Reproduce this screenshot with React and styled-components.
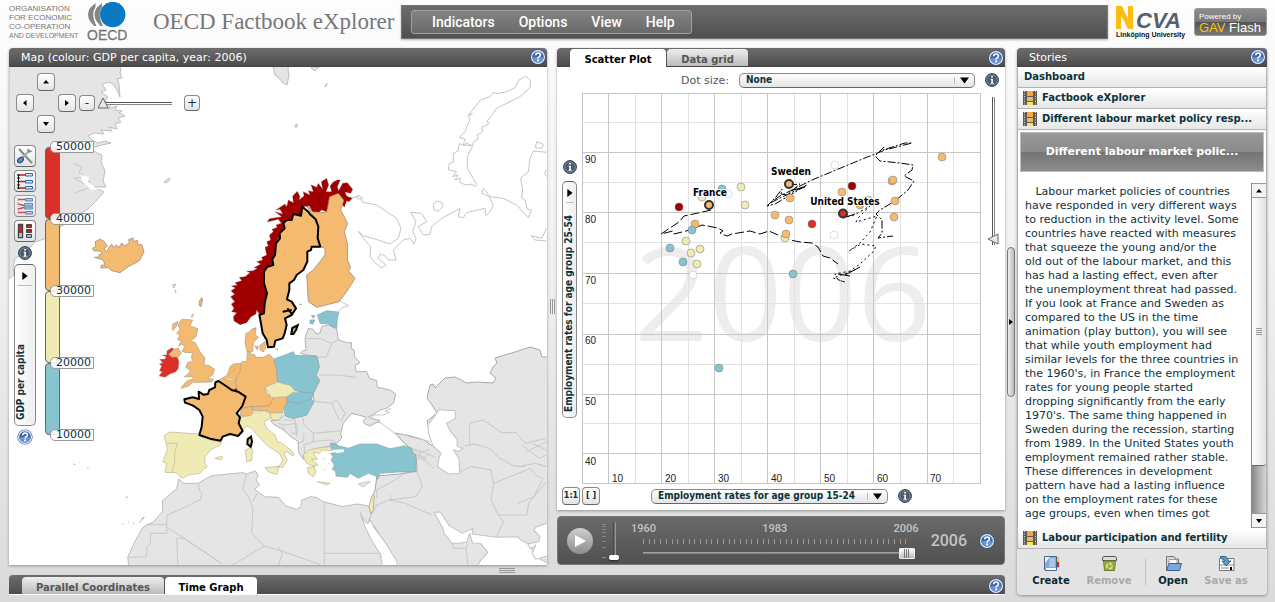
import React from "react";
import styled, { createGlobalStyle, css } from "styled-components";

const sans = `"DejaVu Sans", Verdana, sans-serif`;
const condensed = `"DejaVu Sans Condensed", "DejaVu Sans", sans-serif`;
const display = `Roboto, "Liberation Sans", sans-serif`;
const arial = `"Liberation Sans", Arial, sans-serif`;

const colors = {
  ink: "#0b333c",
  orange: "#f4bb70",
  red: "#d9302a",
  dark: "#a00000",
  yellow: "#f0ebb4",
  blue: "#88c3d0",
  land: "#e5e5e5",
};

const Global = createGlobalStyle`
  * { box-sizing: border-box; }
  html { min-height: 100%; background: linear-gradient(#fdfdfd, #f0f0f0 45%, #dadada) no-repeat #dadada; }
  body { margin: 0; font-family: ${sans}; font-size: 11px; color: ${colors.ink}; }
  button, select, input { font: inherit; color: inherit; margin: 0; padding: 0; }
`;

/* ---------- page frame ---------- */

const Page = styled.div`
  min-height: 100vh;
  display: flex;
  flex-direction: column;
  padding: 0 8px 7px 9px;
`;

const Header = styled.header`
  display: flex;
  align-items: center;
  height: 48px;
  padding-bottom: 4px;
`;

const Workspace = styled.main`
  flex: 1;
  display: flex;
`;

const MainArea = styled.div`
  flex: 1;
  min-width: 0;
  display: flex;
  flex-direction: column;
`;

const TopRow = styled.div`
  flex: 1;
  display: flex;
`;

const Panel = styled.section`
  display: flex;
  flex-direction: column;
  min-width: 0;
  background: #fff;
  border-radius: 4px 4px 0 0;
  box-shadow: 0 1px 3px rgba(0, 0, 0, 0.35);
`;

const MapPanel = styled(Panel)`
  flex: 538 1 0;
`;

const MiddleColumn = styled.div`
  flex: 448 1 0;
  min-width: 0;
  display: flex;
  flex-direction: column;
  gap: 6px;
`;

const PlotPanel = styled(Panel)`
  flex: 1;
`;

const StoriesPanel = styled(Panel)`
  width: 250px;
  background: #e3e3e3;
  border-radius: 4px;
`;

const TitleBar = styled.div`
  display: flex;
  align-items: ${(p) => (p.$tabs ? "flex-end" : "center")};
  height: 19px;
  flex: none;
  padding: ${(p) => (p.$tabs ? "0 1px 0 13px" : "0 1px 0 12px")};
  color: #fff;
  background: linear-gradient(#6d6d6d, #4c4c4c);
  border-bottom: 1px solid #444;
  border-radius: 4px 4px 0 0;
`;

const Title = styled.h2`
  flex: 1;
  margin: 0;
  font-size: 11px;
  font-weight: normal;
`;

const TabList = styled.div`
  flex: 1;
  display: flex;
  align-items: flex-end;
  gap: 1px;
`;

const Tab = styled.button`
  height: ${(p) => (p.$active ? 18 : 17)}px;
  width: ${(p) => p.$width}px;
  margin-bottom: ${(p) => (p.$active ? -1 : 0)}px;
  border: 0;
  border-radius: 4px 4px 0 0;
  padding-top: 4px;
  font-weight: bold;
  font-size: 10px;
  line-height: 14px;
  color: ${(p) => (p.$active ? "#000" : "#555")};
  background: ${(p) => (p.$active ? "#fff" : "linear-gradient(#eee, #bbb)")};
`;

/* ---------- shared controls ---------- */

const IconButton = styled.button`
  display: flex;
  flex: none;
  border: 0;
  background: none;
`;

const HelpButton = () => (
  <IconButton aria-label="Help">
    <svg width="16" height="16" viewBox="0 0 16 16">
      <circle cx="8" cy="8" r="7.6" fill="#2c5290" />
      <circle cx="8" cy="8" r="6.4" fill="#3c67ab" stroke="#e9f0fa" strokeWidth="1.2" />
      <path d="M2.4 9A5.8 5.8 0 0 0 13.6 9Q8 6.500 2.400 9Z" fill="#6d95cc" />
      <path d="M5.700 6.300Q5.700 4 8.100 4Q10.400 4 10.400 6Q10.400 7.200 9 7.900Q8.100 8.400 8.100 9.600" fill="none" stroke="#fff" strokeWidth="1.600" />
      <rect x="7.200" y="10.500" width="1.800" height="1.800" fill="#fff" />
    </svg>
  </IconButton>
);

const InfoButton = () => (
  <IconButton aria-label="Information">
    <svg width="14" height="14" viewBox="0 0 14 14">
      <circle cx="7" cy="7" r="6.400" fill="#4d5a6c" stroke="#2e3a4a" />
      <circle cx="7" cy="7" r="5.200" fill="none" stroke="#8a97a8" strokeWidth=".8" />
      <path d="M6.200 3h1.700v1.600H6.200zM5.600 5.800h2.300v3.900h.9v1H5.500v-1h.8V6.800h-.7z" fill="#fff" />
    </svg>
  </IconButton>
);

const raised = css`
  border: 1px solid #8a8a8a;
  border-bottom-color: #666;
  background: linear-gradient(#fff, #e4e4e4);
  color: ${colors.ink};
`;

const SmallButton = styled.button`
  ${raised}
  display: flex;
  align-items: center;
  justify-content: center;
  flex: none;
  width: ${(p) => p.$size}px;
  height: ${(p) => p.$size}px;
  border-radius: 4px;
  font-size: ${(p) => (p.$tiny ? 8 : 12)}px;
  font-weight: ${(p) => (p.$tiny ? "bold" : "normal")};
  line-height: 12px;
  opacity: ${(p) => (p.$faded ? 0.75 : 1)};
`;

const arrows = { up: "M0 4.500L3 1L6 4.500Z", down: "M0 1L3 5L6 1Z", left: "M4.500 0L1 3L4.500 6Z", right: "M1 0L5 3L1 6Z" };
const Arrow = ({ dir, size = 6 }) => (
  <svg width={size} height={size} viewBox="0 0 6 6"><path d={arrows[dir]} fill="#000" /></svg>
);

const SelectBox = styled.span`
  position: relative;
  display: flex;
  width: ${(p) => p.$width}px;
  svg { position: absolute; right: 6px; top: 3px; pointer-events: none; }
  &::after { content: ""; position: absolute; right: 20px; top: 4px; height: 7px; border-left: 1px solid #bbb; }
`;

const Select = styled.select`
  ${raised}
  appearance: none;
  width: 100%;
  height: 15px;
  border-radius: 5px;
  padding: 0 22px 0 6px;
  font: bold 10px/12px ${condensed};
`;

const VerticalBox = styled.span`
  position: relative;
  display: flex;
  width: ${(p) => p.$width}px;
  height: ${(p) => p.$height}px;
  svg { position: absolute; left: calc(50% - 4px); top: 8px; pointer-events: none; }
  &::after { content: ""; position: absolute; left: 4px; right: 4px; top: 21px; border-top: 1px solid #bbb; }
`;

const VerticalSelect = styled.select`
  ${raised}
  appearance: none;
  width: 100%;
  height: 100%;
  border-radius: 5px;
  writing-mode: vertical-rl;
  transform: rotate(180deg);
  padding: 5px 0 22px;
  background: linear-gradient(90deg, #eee, #fff);
  font: bold 10px/12px ${condensed};
  text-align: start;
`;

const HorizontalDropDown = ({ label, width, children }) => (
  <SelectBox $width={width}>
    <Select aria-label={label}><option>{children}</option></Select>
    <Arrow dir="down" size={9} />
  </SelectBox>
);

const VerticalDropDown = ({ label, width, height, children }) => (
  <VerticalBox $width={width} $height={height}>
    <VerticalSelect aria-label={label}><option>{children}</option></VerticalSelect>
    <Arrow dir="right" size={8} />
  </VerticalBox>
);

const Grip = styled.div`
  flex: none;
  align-self: center;
  width: ${(p) => (p.$across ? 16 : 5)}px;
  height: ${(p) => (p.$across ? 5 : 15)}px;
  background: repeating-linear-gradient(${(p) => (p.$across ? "180deg" : "90deg")}, #999 0 1px, transparent 1px 2px);
`;

const Splitter = styled.div`
  display: flex;
  justify-content: center;
  flex: none;
  ${(p) => (p.$across ? "height: 10px; align-items: center;" : "width: 10px;")}
`;

/* ---------- header ---------- */

const OrgName = styled.div`
  width: 78px;
  font: 8px/9px ${arial};
  color: #777;
  white-space: nowrap;
  small { display: block; font-size: 7px; }
`;

const Brand = styled.h1`
  flex: none;
  width: 248px;
  margin: 0 0 0 26px;
  font: 23px/28px "Liberation Serif", Georgia, serif;
  color: #777;
  white-space: nowrap;
`;

const MenuBand = styled.div`
  flex: 1;
  display: flex;
  align-items: center;
  height: 34px;
  padding-left: 9px;
  background: linear-gradient(#6c6c6c, #505050);
  border: 1px solid #777;
  box-shadow: 0 1px 2px rgba(0, 0, 0, 0.3);
`;

const Menu = styled.nav`
  display: flex;
  align-items: center;
  gap: 24px;
  width: 281px;
  height: 24px;
  padding-left: 20px;
  border: 1px solid #a0a0a0;
  border-radius: 3px;
  background: linear-gradient(#838383, #6a6a6a);
`;

const MenuItem = styled.button`
  border: 0;
  background: none;
  color: #fff;
  font: 500 14px/20px ${display};
`;

const Ncva = styled.div`
  margin-left: 8px;
  width: 70px;
  font: bold 7px/9px ${arial};
  color: #111;
  white-space: nowrap;
  svg { display: block; }
`;

const GavBadge = styled.div`
  width: 73px;
  height: 28px;
  margin-left: 8px;
  padding: 3px 4px;
  border: 1px solid #999;
  border-radius: 3px;
  background: linear-gradient(#8d8d8d, #777 50%, #555 50%, #777);
  color: #fff;
  font: 8px/9px ${arial};
  white-space: nowrap;
  b { display: block; font: 13px/13px ${arial}; }
  em { font-style: normal; color: #fcc010; }
`;

const OecdLogo = () => (
  <svg width="40" height="40" viewBox="0 0 40 40" role="img" aria-label="OECD">
    <circle cx="25.700" cy="12.500" r="12.700" fill="#0a7ac4" />
    <path d="M8.500 1L3 6Q-1 12.500 3 19L7 24H9.500Q3.500 12.500 8.500 5ZM15 1L9.500 6Q5.500 12.500 9.500 19L13.500 24H16Q10 12.500 15 5Z" fill="#858585" />
    <text x="0" y="38" fontFamily="Liberation Sans" fontSize="14" fill="#777" stroke="#777" strokeWidth=".3">OECD</text>
  </svg>
);

/* ---------- map ---------- */

const MapBody = styled.div`
  position: relative;
  flex: 1;
  overflow: hidden;
`;

const MapDrawing = styled.svg`
  position: absolute;
  inset: 0;
  width: 100%;
  height: 100%;
`;

const MapControls = styled.div`
  position: relative;
  display: inline-flex;
  flex-direction: column;
  gap: 11px;
  padding: 4px 5px;
`;

const NavRow = styled.div`
  display: flex;
  align-items: center;
  gap: 2px;
`;

const PanPad = styled.div`
  display: grid;
  grid-template: repeat(3, 21px) / repeat(3, 21px);
  place-items: center;
  grid-template-areas: ". up ." "left . right" ". down .";
`;

const PanButton = styled(SmallButton)`
  grid-area: ${(p) => p.$dir};
`;

const triangleUp = `url("data:image/svg+xml,%3Csvg xmlns='http://www.w3.org/2000/svg' width='12' height='12'%3E%3Cpath d='M6 1L11 11H1Z' fill='%23e8e8e8' stroke='%23666'/%3E%3C/svg%3E")`;
const triangleLeft = `url("data:image/svg+xml,%3Csvg xmlns='http://www.w3.org/2000/svg' width='12' height='12'%3E%3Cpath d='M1 6L11 1V11Z' fill='%23e8e8e8' stroke='%23666'/%3E%3C/svg%3E")`;

const ZoomSlider = styled.input`
  appearance: none;
  width: 75px;
  height: 14px;
  margin-right: 10px;
  background: linear-gradient(#555, #555) 6px 6px / 100% 1px no-repeat,
    linear-gradient(#888, #888) 6px 8px / 100% 1px no-repeat,
    linear-gradient(#fff, #fff) 6px 7px / 100% 1px no-repeat;
  &::-webkit-slider-thumb { appearance: none; width: 12px; height: 12px; background: ${triangleUp}; }
`;

const LegendRow = styled.div`
  display: flex;
  gap: 9px;
`;

const ToolColumn = styled.div`
  display: flex;
  flex-direction: column;
  align-items: center;
  gap: 3px;
`;

const InfoSlot = styled.div`
  display: flex;
  padding: 1px 0;
`;

const Legend = styled.div`
  width: 15px;
  padding-top: 2px;
`;

const LegendBand = styled.div`
  position: relative;
  height: 72px;
  border: 1px solid #666;
  border-radius: 4px;
  background: ${(p) => p.$color};
`;

const LegendValue = styled.span`
  position: absolute;
  left: 4px;
  ${(p) => (p.$last ? "bottom: -7px;" : "top: -7px;")}
  width: 44px;
  padding-right: 2px;
  z-index: 1;
  border: 1px solid #999;
  border-radius: 5px 0 0 5px;
  background: rgba(255, 255, 255, 0.88);
  line-height: 10px;
  text-align: right;
`;

const bands = [
  [colors.red, "50000"],
  [colors.orange, "40000"],
  [colors.yellow, "30000"],
  [colors.blue, "20000"],
];

const Sheet = ({ x, y, sx = 0.33333, children }) => (
  <g transform={`translate(${x} ${y}) scale(${sx} .33333)`}>{children}</g>
);

const Shape = ({ d, fill = colors.land, line = "#bdbdbd", w = 1 }) => (
  <path d={d} fill={fill} stroke={line} strokeWidth={w} strokeLinejoin="round" vectorEffect="non-scaling-stroke" />
);
const Border = ({ d, line = "#c8c8c8" }) => <Shape d={d} fill="none" line={line} />;

const edge = "#a99d8c";

const EuropeMap = () => (
  <MapDrawing viewBox="9 67 538 498" preserveAspectRatio="xMinYMin slice" role="img" aria-label="Map of Europe coloured by GDP per capita">
    {/* Greenland and the arctic islands */}
    <Shape d="M9 60H116L121 69L120 73L122 78L117 79L119 84L120 97L117 90L113 84L109 82L102 84L106 90L101 92L108 97L104 101L112 104L108 109L117 106L115 110L122 111L119 113L125 116L118 118L121 122L115 124L117 129L109 127L112 131L101 130L104 134L94 133L88 136L92 140L98 143L105 141L111 143L102 145L91 148L97 153L102 155L101 162L105 171L103 181L106 187L94 187L104 192L96 201L88 209L80 214L62 226L44 239L35 242L29 249L24 248L20 256L15 258L13 268L14 275L9 279Z" />
    <Border d="M73 163L82 167L79 173L85 177L74 178L84 184L89 181L91 187L75 193" />
    <path d="M80 175L89 177L88 182L96 188L104 188L91 190L83 182Z" fill="#fff" />
    <Shape d="M272 60H290L288 69L289 75L287 85L283 83L279 78L275 75ZM311 67L319 67L315 71L312 69ZM325 87L327 83L327 84ZM295 125L297 124L297 127L295 127ZM164 182L169 178L170 180L166 183ZM172 285L176 284L174 288ZM175 290L176 293Z" />

    <Sheet x={0} y={140}>
      <Shape fill={colors.orange} line={edge} d="M277 325L287 320L286 305L300 297L313 305L322 318L312 326L320 336L328 320L335 312L340 322L350 315L357 323L365 309L374 318L388 309L386 299L399 294L401 306L411 300L415 315L425 313L432 335L425 350L418 362L385 380L360 398L335 392L325 383L302 384L304 375L315 376L310 360L283 352L298 351L297 344L307 342L301 333L282 333Z" />
    </Sheet>

    {/* Asia and the Middle East */}
    <Shape line="#a8a8a8" d="M430 385L427 398L432 405L437 413L427 421L431 434L434 447L424 440L411 436L395 433L402 441L408 446L416 455L417 471L400 474L377 476L375 490L371 500L370 513L369 523L374 526L385 543L396 562V575H555V357L542 357L540 350L530 347L515 352L495 358L497 363L493 367L490 373L496 378L493 383L477 382L467 383L455 377L445 378L435 388L433 384Z" />

    <Sheet x={0} y={400} sx={0.35714}>
      {/* North Africa */}
      <Shape d="M500 237L515 250L555 250L590 228L640 222L680 218L690 222L715 213L723 225L717 240L727 255L713 268L740 290L780 292L800 318L830 328L843 320L845 300L870 290L885 292L905 305L960 320L1000 312L1032 318L1040 345L1032 362L1045 379L1080 430L1112 500H360L358 470L380 420L400 382L430 365L455 335L455 302L495 265Z" />
      <g fill="#fff" stroke="#c4c4c4" strokeWidth="3" strokeLinejoin="round">
        <path d="M1230 28L1240 30L1275 32L1275 55L1250 70L1260 92L1280 118L1280 138L1296 145L1284 154L1270 150L1285 175L1287 220L1255 222L1225 200L1230 170L1235 160L1212 137L1200 100L1198 75L1216 50Z" />
        <path d="M1215 337L1233 336L1258 377L1295 400L1325 385L1322 402L1390 412L1450 410L1460 422L1482 432L1498 470L1545 495V510H1330L1345 482L1366 457L1345 430L1323 429L1315 400L1306 427L1285 430L1266 430L1243 400L1240 385Z" />
        <path d="M1008 338L1020 362L1030 371L1037 360L1045 379L1080 430L1112 485L1112 510H1072L1066 465L1040 420L1022 380Z" />
        <path d="M1540 362L1525 372L1500 382L1495 391L1512 410L1508 425L1478 432L1484 445L1496 441L1500 435L1490 460L1500 478L1540 465Z" />
      </g>
      <Border d="M555 250L558 270L565 280L562 298L530 315L498 332L467 345V400H421V430L412 442L410 470L358 472M467 373H410M467 381L620 490M690 222L680 268L697 293L708 325L705 400L740 438L650 496M740 438L780 450L895 493M720 280L708 305M908 304V495M908 460H1066M495 415H516L620 490M495 415L498 496M780 440L790 462L780 496" />
      <Border d="M1055 295L1055 270L1105 240L1130 222M1045 320L1090 300L1130 308L1210 345M1167 215L1183 258L1165 290L1090 300M1040 342L1055 320M1092 285L1098 305M1165 175L1185 178L1215 205M1150 140L1160 150L1195 180M1170 175L1180 155L1215 170M1287 215L1320 200L1375 210L1382 250L1375 300L1395 345L1410 365L1390 412M1395 345H1475M1382 250L1440 225L1485 205L1500 225L1520 235L1495 290L1450 310M1315 138V70L1353 60L1405 98L1445 98L1470 130L1530 115M1300 138L1330 132L1370 145L1400 175L1440 198L1470 200M1460 198L1500 190L1530 200M1475 155L1530 125M1490 130L1530 150M1460 135L1510 175L1530 165M1475 345L1480 310L1530 245M1266 430L1270 445H1305L1310 430M1305 445L1310 496" />
      <Shape fill={colors.yellow} line="#b9b49a" d="M1042 286L1048 288L1045 330L1038 342L1033 320ZM205 192l6 2M222 187l2 2M244 204l4 2M352 291l6 1M343 373h3M358 364l4 4M373 369l4 3M391 368l10 -16M400 358l4 -8" />
      <Shape line="#c4c4c4" d="M1003 253L1018 247L1037 245L1018 260Z" />
    </Sheet>

    {/* Northern Russia */}
    <Sheet x={330} y={65}>
      <g fill="none" stroke="#c4c4c4" strokeWidth="3" strokeLinejoin="round">
        <path d="M415 150L430 132L452 105L480 95L492 82L500 86L530 80L555 68L567 45L588 34L602 46L600 68L570 95L500 130L485 152L470 170L478 175L455 188L458 200L442 210L445 222L432 230L425 242L412 235L400 240L405 222L388 218L405 200L412 180L420 165L415 155L427 145Z" />
        <path d="M388 236L400 240L428 242L412 275L412 310L440 358L436 364L425 358L408 360L388 352L392 340L375 345L384 330L368 335L380 320L355 315L358 295L370 292L370 265L384 258Z" />
        <path d="M66 400L85 392L98 412L140 420L200 460L213 490L205 520L180 537L135 522L100 512L84 498L105 525L122 545L120 575L132 590L155 609L168 600L145 580L150 567L165 572L175 585L198 585L190 555L220 525L240 520L252 537L258 520L248 500L258 470L242 442L275 445L290 470L265 485L280 510L300 508L305 485L335 460L372 440L390 430L385 455L400 458L410 443L465 430L468 452L480 440L490 420L478 395L455 385L460 370L480 395L520 400L560 420L595 458L604 435L592 432L585 405L575 400L578 375L572 340L595 320L600 280L610 258L650 262" />
        <path d="M310 418L320 408L335 412L340 422L325 439L312 435ZM616 248L620 230L640 238L636 250ZM603 512L635 520L650 490M604 512L615 525L650 528M650 315L644 325L650 335" />
      </g>
      <path d="M78 397L90 392L98 400L86 402Z" fill="#fff" stroke="#c4c4c4" strokeWidth="3" />
      <Border d="M0 700L28 708L40 714L56 722L36 728L28 738" />
      <Border d="M183 1030L165 1038L180 1042L160 1050L135 1050L122 1058L130 1072L150 1072L190 1102L215 1120" />
    </Sheet>

    {/* Central and southern Europe */}
    <Sheet x={150} y={300}>
      <Shape line="#b3b3b3" d="M470 165L452 160L456 154L468 150L465 115L475 85L490 88L498 102L511 98L515 80L535 75L560 85L565 120L590 128L605 128L603 145L612 150L614 170L630 188L616 196L618 215L650 215L658 235L680 242L682 262L720 270L737 282L730 310L710 325L690 330L668 345L655 350L665 355L690 362L660 378L645 372L640 362L650 352L625 345L605 340L580 370L572 400L575 415L560 430L540 438L490 448L460 465L460 478L445 455L445 425L425 412L400 390L370 372L362 362L388 360L403 345L430 355L470 345L492 305L490 280L508 245L498 225L508 200L500 168Z" />
      <Border d="M468 116L510 116L545 130L565 120M545 130L530 170L503 172M508 225L560 225L620 232M490 303L545 310L560 300L585 340L572 365M545 310L558 340L568 360M458 350L462 375L490 400L575 392M400 360L435 360L440 410M385 370L405 375L440 370M462 400L460 425L440 430M490 400L490 425L462 435L464 460M490 425L540 420L555 425M440 370L442 400L425 400M395 375L410 400" />
      <Border d="M755 402L785 412L815 418L840 425M785 445L815 455L840 450M800 465L820 475L840 460" />
      <g fill={colors.red} stroke={edge}>
        <path d="M27 228L36 215L28 212L35 198L28 192L38 188L29 178L45 177L48 170L36 166L50 164L51 152L66 143L73 148L62 160L65 172L82 170L87 185L85 205L78 215L60 222L45 232Z" />
      </g>
      <g fill={colors.orange} stroke={edge} strokeWidth="2">
        <path d="M56 164L72 147L85 145L94 160L84 172L68 170Z" />
        <path d="M95 58L128 60L120 77L144 86L138 110L122 123L136 128L150 155L165 175L162 195L176 196L194 208L188 225L172 235L190 238L186 246L152 247L128 247L116 258L93 265L109 244L130 236L130 230L103 230L120 217L118 208L108 203L112 188L128 184L124 172L128 158L108 158L96 154L104 140L96 132L86 138L94 122L82 118L90 105L80 100L90 88L84 75Z" />
        <path d="M68 72L84 64L80 78L68 92ZM124 48L131 42L126 52ZM150 0L156 -8L156 4L152 15Z" />
        <path d="M288 100L300 95L304 88L318 83L316 105L325 112L310 128L308 155L292 156L285 130ZM329 137L345 124L347 144L340 156L330 150ZM314 137L325 140L322 150ZM376 145L384 150Z" />
        <path d="M292 155L302 158L301 165L312 162L318 172L340 172L358 162L371 176L380 210L383 245L345 262L350 280L370 295L360 318L305 320L270 325L285 290L262 275L255 250L262 225L272 190L278 184L290 186Z" />
        <path d="M207 240L232 225L240 200L250 192L272 190L270 215L258 235L258 250L262 270L257 274L240 268ZM217 236L240 242L258 240M245 215L258 205" />
        <path d="M270 347L274 325L305 320L310 332L302 347L285 350Z" />
        <path d="M305 320L358 318L370 293L394 290L413 292L412 306L403 325L395 338L370 340L345 332L310 332Z" />
      </g>
      <path d="M250 272L258 263L264 277Z" fill="#b01820" />
      <g fill={colors.blue} stroke="#86a6ac" strokeWidth="2">
        <path d="M372 177L410 163L430 155L436 166L500 168L508 200L498 225L509 240L490 280L460 278L435 272L420 256L383 246L380 210Z" />
        <path d="M410 292L430 278L460 278L490 280L485 298L445 310L412 305Z" />
        <path d="M403 322L412 306L445 310L485 298L492 305L480 325L470 345L430 355L410 350L403 340Z" />
        <path d="M502 45L530 32L567 36L562 55L560 85L548 82L535 72L510 70ZM480 60L495 60L488 73L480 70ZM484 46L495 47L490 55Z" />
        <path d="M541 430L556 430L565 437L595 445L630 432L680 432L720 446L765 437L785 445L788 460L797 465L798 515L778 516L745 516L690 520L683 538L676 527L655 520L625 535L600 520L592 532L558 528L557 515L547 508L553 495L543 480L549 470L541 460L583 456L583 449L545 448Z" />
      </g>
      <path d="M552 449L582 448L582 456L560 460Z" fill="#fff" />
      <g fill={colors.yellow} stroke="#b9b49a" strokeWidth="2">
        <path d="M345 262L383 246L395 250L420 256L435 272L410 290L365 293Z" />
        <path d="M358 340L400 338L388 360L365 358Z" />
        <path d="M272 350L302 347L312 338L345 332L360 340L362 355L342 365L350 385L375 405L382 425L398 430L432 460L430 468L410 455L402 460L412 480L398 502L385 502L398 482L390 462L350 435L328 412L305 385L290 378L275 392L268 370ZM345 503L387 499L380 524L355 515ZM286 450L300 443L308 448L305 482L290 485Z" />
        <path d="M42 408L58 396L148 402L150 408L182 420L215 428L210 436L185 447L165 470L165 490L172 500L160 508L150 520L115 525L98 535L90 530L78 518L45 517L50 490L38 485L52 450L48 428ZM50 430L82 430L74 460L75 485L66 515M195 475L215 468L218 475L210 480Z" />
        <path d="M460 465L478 450L500 445L540 440L546 452L515 450L508 460L490 458L502 478L485 478L505 495L490 497L498 515L490 530L475 520L472 502L495 500L470 490L465 482ZM502 545L540 550L530 554ZM520 475l5 4M535 490l4 3M522 508l4 3" />
      </g>
      <path d="M205 243L228 258L245 270L264 275L287 290L277 318L260 340L270 352L266 370L278 393L264 408L240 402L218 410L212 422L180 416L148 405L155 380L158 350L148 330L128 316L105 308L103 298L128 292L147 297L146 275L160 284L174 282L178 270L195 262L196 247Z" fill={colors.orange} stroke="#000" strokeWidth="6" strokeLinejoin="round" />
      <path d="M293 418L303 410L306 425L302 440L292 432Z" fill={colors.orange} stroke="#000" strokeWidth="6" />
    </Sheet>

    {/* Scandinavia */}
    <Sheet x={150} y={160}>
      <path d="M468 135L490 155L525 158L535 135L538 110L565 100L582 120L572 150L593 190L583 215L593 255L592 300L602 322L596 332L615 355L606 370L590 395L567 425L500 442L475 425L472 370L470 345L490 330L525 285L525 265L511 260L503 225L505 200L497 178Z" fill={colors.orange} stroke={edge} strokeWidth="3" />
      <path d="M330 465L320 450L318 462L303 470L290 488L270 494L252 483L250 470L260 458L245 455L252 445L244 432L254 425L242 410L254 403L243 392L256 384L244 378L262 375L255 368L275 362L268 352L285 350L300 338L290 334L310 332L322 325L312 323L332 312L320 305L338 300L335 292L350 285L345 262L355 258L350 245L362 240L358 225L370 215L366 208L382 202L378 195L394 190L385 178L352 186L358 176L395 170L375 155L398 162L390 148L378 150L405 132L410 140L415 120L430 128L428 108L442 94L450 110L447 120L462 108L460 95L480 105L475 92L490 95L483 74L500 82L505 70L518 88L514 65L530 55L536 75L528 95L545 95L540 78L550 66L562 60L571 60L562 80L566 92L578 70L592 68L608 88L602 100L585 96L590 108L607 115L597 125L590 122L583 142L578 135L582 120L565 100L538 110L530 155L515 150L508 156L488 155L478 138L457 140L453 168L425 175L405 190L400 205L378 250L370 300L368 315L342 335L350 400L340 460Z" fill={colors.dark} stroke="#8d6464" />
      <path d="M457 140L475 155L480 163L497 178L505 200L503 235L511 260L485 260L483 270L472 275L472 305L460 330L440 345L432 360L418 370L418 390L411 418L425 425L438 445L425 465L405 475L410 495L404 520L398 535L376 542L372 560L354 562L350 540L338 520L332 485L328 465L342 460L344 430L351 400L342 370L342 335L352 320L370 315L367 298L375 285L378 250L390 235L389 220L404 205L400 190L410 180L425 180L430 162L453 167Z" fill={colors.orange} stroke="#000" strokeWidth="6" strokeLinejoin="round" />
      <path d="M398 455L425 450M412 445L428 465M424 522L427 504L443 496L438 510L430 522Z" stroke="#000" strokeWidth="6" fill={colors.orange} />
      <path d="M448 433l8 0M310 505l8 3M147 435L150 420L158 418L153 440Z" fill={colors.orange} stroke={edge} strokeWidth="3" />
    </Sheet>
  </MapDrawing>
);

const toolIcons = {
  Settings: (
    <svg width="18" height="18" viewBox="0 0 18 18">
      <path d="M3 2L14 14M12 12L16 16" stroke="#8b8b8b" strokeWidth="2.200" />
      <path d="M14 3L6 11" stroke="#9aa" strokeWidth="1.800" />
      <path d="M12 1.500Q10 4 13 5.500Q16 6 16.500 3.500L14.500 4L13.500 3Z" fill="#888" />
      <ellipse cx="4.500" cy="13" rx="3.400" ry="2.300" transform="rotate(-45 4.500 13)" fill="#5e86c0" stroke="#234a86" />
    </svg>
  ),
  "Even intervals": (
    <svg width="18" height="18" viewBox="0 0 18 18">
      <path d="M2.500 2V17M1 3H4M1 9.500H4M1 16H4M1 6H4M1 13H4" stroke="#111" />
      <path d="M3 3H10M3 9.500H10M3 16H10" stroke="#c81818" strokeWidth="1.300" />
      <path d="M9.500 1.500H16.500V4H9.500ZM9.500 8.500H16.500V11H9.500ZM9.500 14.500H16.500V17H9.500Z" fill="#d7e6f7" stroke="#2c66b0" />
    </svg>
  ),
  "Quantile intervals": (
    <svg width="18" height="18" viewBox="0 0 18 18">
      <path d="M2 1V17" stroke="#888" strokeDasharray="1 1" />
      <path d="M2 2.500H10M2 7L8 8.500H10M2 12L8 10.500M2 15.500H10" stroke="#c81818" strokeWidth="1.300" fill="none" />
      <path d="M9.500 1.500H16.500V4H9.500ZM8.500 6.500H16.500V9H8.500ZM8.500 10H16.500V12H8.500ZM9.500 14.500H16.500V17H9.500Z" fill="#9fc0ea" stroke="#2c66b0" />
    </svg>
  ),
  "Colour scale": (
    <svg width="18" height="18" viewBox="0 0 18 18">
      <path d="M2.500 2.500H6.500V15.500H2.500Z" fill="#c22" stroke="#444" strokeWidth="1.400" />
      <path d="M3 11H6V15H3Z" fill="#9bbce0" />
      <path d="M10.500 2.500H15.500V5.500H10.500ZM10.500 7.500H15.500V10.500H10.500Z" fill="#b22" stroke="#444" />
      <path d="M10.500 12.500H15.500V15.500H10.500Z" fill="#9bbce0" stroke="#444" />
    </svg>
  ),
};

/* ---------- scatter plot ---------- */

const PlotBody = styled.div`
  flex: 1;
  display: flex;
  flex-direction: column;
  padding-top: 5px;
`;

const PlotToolbar = styled.div`
  display: flex;
  justify-content: flex-end;
  align-items: center;
  gap: 10px;
  height: 21px;
  padding: 0 6px 5px;
  color: #555;
`;

const PlotRow = styled.div`
  display: grid;
  grid-template-columns: 25px minmax(0, 1fr) 24px;
`;

const AxisColumn = styled.div`
  display: flex;
  flex-direction: column;
  align-items: center;
  gap: 7px;
  padding-top: 67px;
`;

const ChartSvg = styled.svg`
  display: block;
  width: 100%;
  height: auto;
`;

const SizeSlider = styled.input`
  appearance: none;
  writing-mode: vertical-lr;
  justify-self: center;
  width: 14px;
  height: 148px;
  margin-top: 4px;
  background: linear-gradient(#555, #555) 6px 0 / 1px 100% no-repeat,
    linear-gradient(#888, #888) 8px 0 / 1px 100% no-repeat;
  &::-webkit-slider-thumb { appearance: none; width: 12px; height: 12px; background: ${triangleLeft}; }
`;

const PlotFooter = styled.div`
  display: flex;
  align-items: center;
  gap: 2px;
  height: 24px;
  padding-left: 5px;
`;

const AxisChoice = styled.div`
  display: flex;
  align-items: center;
  gap: 10px;
  margin-left: 49px;
`;

const dots = [
  [679, 207, "dark"], [722, 189, "blue"], [741, 187, "yellow"], [745, 205, "yellow"], [728, 194, "white"],
  [702, 197, "yellow"], [695, 224, "orange"], [692, 230, "blue"], [686, 241, "yellow"], [670, 248, "blue"],
  [700, 249, "yellow"], [691, 253, "yellow"], [683, 262, "blue"], [697, 264, "yellow"], [693, 275, "white"],
  [790, 198, "orange"], [775, 215, "orange"], [789, 220, "orange"], [785, 238, "yellow"], [786, 234, "orange"],
  [793, 274, "blue"], [719, 368, "blue"], [835, 165, "white"], [852, 186, "dark"], [842, 192, "orange"],
  [812, 224, "red"], [834, 235, "white"], [868, 200, "yellow"], [860, 205, "orange"], [892, 181, "orange"],
  [893, 180, "orange"], [895, 201, "orange"], [894, 217, "orange"], [942, 157, "orange"],
];

const ScatterChart = () => (
  <ChartSvg viewBox="582 93 399 391" role="img" aria-label="Scatter plot of employment rates, 2006">
    <text x="634" y="341" fontFamily="Open Sans" fontSize="130" fill="#ededed">2006</text>
    <g stroke="#e2e2e2">
      {[635.5, 688.5, 741.5, 794.5, 847.5, 900.5, 953.5].map((x) => <line key={x} x1={x} x2={x} y1="93" y2="484" />)}
      {[122.5, 182.5, 242.5, 303.5, 364.5, 423.5].map((y) => <line key={y} y1={y} y2={y} x1="582" x2="980" />)}
    </g>
    <g stroke="#c6c6c6">
      {[608.5, 661.5, 714.5, 767.5, 820.5, 873.5, 927.5].map((x) => <line key={x} x1={x} x2={x} y1="93" y2="484" />)}
      {[152.5, 212.5, 273.5, 334.5, 394.5, 453.5].map((y) => <line key={y} y1={y} y2={y} x1="582" x2="980" />)}
      <rect x="582.500" y="93.500" width="398" height="390" fill="none" />
    </g>
    <g fontFamily="Liberation Sans" fontSize="10" fill="#222">
      {[90, 80, 70, 60, 50, 40].map((n, i) => <text key={n} x="585" y={163 + Math.round(i * 60.400)}>{n}</text>)}
      {[10, 20, 30, 40, 50, 60, 70].map((n, i) => <text key={n} x={612 + i * 53} y="482">{n}</text>)}
    </g>
    <g fill="none" stroke="#000" strokeWidth="1">
      <path strokeDasharray="9 3" d="M711 210L698 213L684 216L679 222L661 234L673 231L674 234L690 230L702 225L718 228L723 231L720 233L727 236L732 234L750 231L760 234L769 231L778 235L790 240L800 242L812 243L818 247L823 256L830 258L838 264" />
      <path strokeDasharray="8 2 2 2" d="M789 185L800 184L787 195L781 194L782 189L776 197L767 206L775 204L807 185L770 203L780 196L812 180L860 160L885 150L912 143L905 143L883 150L884 147L875 156L880 161L900 163L913 165L912 170L904 176L914 181L908 190L895 201L880 210L876 214L882 220L882 233L878 238L893 236" />
      <path strokeDasharray="2 3" d="M843 214L850 217L865 209L870 206L858 218L856 222L877 216L870 232L860 243L849 251L861 244L876 246L874 251L860 264L850 271L835 274L838 280L845 282L833 278L855 270" />
      <path d="M843 218L855 214M845 275L860 267M838 274L850 276M793 190L805 187" />
    </g>
    {dots.map(([x, y, c], i) => (
      <circle key={i} cx={x} cy={y} r="4" fill={c === "white" ? "#fff" : colors[c]} stroke={c === "white" ? "#bbb" : "#777"} strokeOpacity=".5" />
    ))}
    <g stroke="#333" strokeWidth="2">
      <circle cx="709" cy="205" r="4" fill={colors.orange} />
      <circle cx="789" cy="184" r="4" fill={colors.orange} />
      <circle cx="843" cy="213.500" r="4" fill={colors.red} />
    </g>
    <g fontFamily="DejaVu Sans Condensed, DejaVu Sans" fontWeight="bold" fontSize="10" fill="#000" stroke="#fff" strokeWidth="2" paintOrder="stroke" textAnchor="middle">
      <text x="710" y="196">France</text>
      <text x="791" y="175">Sweden</text>
      <text x="845" y="205">United States</text>
    </g>
  </ChartSvg>
);

/* ---------- time panel ---------- */

const TimePanel = styled.section`
  display: flex;
  align-items: center;
  height: 49px;
  padding: 0 9px;
  border: 1px solid #777;
  border-radius: 4px;
  background: linear-gradient(#6a6a6a, #505050);
  color: #c4c4c4;
  font-family: ${display};
  font-weight: 500;
`;

const PlayButton = styled.button`
  display: flex;
  align-items: center;
  justify-content: center;
  flex: none;
  width: 26px;
  height: 26px;
  border: 0;
  border-radius: 50%;
  background: linear-gradient(#cfcfcf, #8d8d8d);
`;

const SpeedScale = styled.svg`
  flex: none;
  margin: 0 0 0 9px;
`;

const SpeedSlider = styled.input`
  appearance: none;
  writing-mode: vertical-lr;
  width: 12px;
  height: 38px;
  margin-left: 2px;
  background: linear-gradient(90deg, #333, #aaa) 5px 0 / 3px 100% no-repeat;
  &::-webkit-slider-thumb { appearance: none; width: 10px; height: 5px; border-radius: 2px; background: #fff; box-shadow: 0 1px 2px #222; }
`;

const TimeTrack = styled.div`
  flex: 1;
  min-width: 0;
  padding: 0 12px 0 11px;
`;

const YearLabels = styled.div`
  display: flex;
  justify-content: space-between;
  font-size: 11px;
  line-height: 14px;
`;

const Ticks = styled.div`
  display: flex;
  justify-content: space-between;
  margin: 3px 12px 3px;
  i { width: 1px; height: 5px; background: #999; }
`;

const TimeSlider = styled.input`
  display: block;
  appearance: none;
  width: calc(100% - 16px);
  height: 12px;
  margin-left: 12px;
  background: linear-gradient(#aaa, #777) 0 5px / 100% 2px no-repeat;
  &::-webkit-slider-thumb {
    appearance: none; width: 16px; height: 11px; border: 1px solid #eee; border-radius: 1px;
    background: linear-gradient(90deg, transparent 4px, #777 4px 5px, transparent 5px 6px, #777 6px 7px, transparent 7px 8px, #777 8px 9px, transparent 9px), linear-gradient(#fff, #bbb);
  }
`;

const YearNow = styled.strong`
  margin-right: 12px;
  font-size: 16px;
  font-weight: 500;
`;

/* ---------- bottom bar and stories ---------- */

const BottomBar = styled(TitleBar)`
  height: 20px;
  border-radius: 4px 4px 0 0;
  border-bottom: 1px solid #fff;
`;

const CollapseSlot = styled.div`
  flex: none;
  width: 12px;
  display: flex;
  align-items: center;
  justify-content: center;
`;

const CollapseButton = styled.button`
  width: 8px;
  height: 150px;
  border: 1px solid #777;
  border-radius: 4px;
  background: linear-gradient(90deg, #eee, #bbb);
`;

const StoryRow = styled.button`
  display: flex;
  align-items: center;
  gap: 5px;
  flex: none;
  height: 21px;
  padding-left: ${(p) => (p.$plain ? 6 : 5)}px;
  padding-bottom: 2px;
  border: 1px solid #b5b5b5;
  border-top-color: #fff;
  background: linear-gradient(#fff, #e6e6e6);
  font-weight: bold;
  font-size: 10px;
  text-align: left;
  white-space: nowrap;
`;

const StoryBody = styled.div`
  flex: 1;
  display: flex;
  flex-direction: column;
  border: 1px solid #b0b0b0;
  border-width: 0 1px;
  background: #fff;
`;

const StoryTitle = styled.h3`
  flex: none;
  margin: 2px 2px 11px;
  height: 40px;
  border: 1px solid #bbb;
  background: linear-gradient(#989898, #8b8b8b 50%, #747474 50%, #8c8c8c);
  color: #fff;
  font-size: 11px;
  line-height: 38px;
  text-align: center;
`;

const StoryScroll = styled.div`
  flex: 1;
  display: flex;
  min-height: 345px;
`;

const StoryText = styled.p`
  flex: 1;
  margin: 0;
  padding: 2px 0 0 7px;
  line-height: 14px;
  white-space: pre;
`;

const Scrollbar = styled.div`
  flex: none;
  display: flex;
  flex-direction: column;
  width: 15px;
  border-left: 1px solid #888;
  background: linear-gradient(90deg, #888, #d5d5d5);
`;

const ScrollButton = styled.button`
  display: flex;
  align-items: center;
  justify-content: center;
  height: 15px;
  border: 1px solid #999;
  border-width: 1px 0;
  background: #f4f4f4;
`;

const ScrollThumb = styled.div`
  display: flex;
  align-items: center;
  justify-content: center;
  flex: 0 0 268px;
  border-bottom: 1px solid #666;
  border-radius: 0 0 3px 0;
  background: linear-gradient(90deg, #fff, #e2e2e2);
`;

const ThumbGrip = styled.i`
  width: 6px;
  height: 7px;
  background: repeating-linear-gradient(#999 0 1px, transparent 1px 2px);
`;

const Track = styled.div`
  flex: 1;
`;

const StoryFooter = styled.div`
  display: flex;
  align-items: center;
  height: 46px;
  padding: 0 0 1px 5px;
`;

const FooterButton = styled.button`
  display: flex;
  flex-direction: column;
  align-items: center;
  gap: 2px;
  width: ${(p) => p.$width}px;
  border: 0;
  background: none;
  font: bold 10px/14px ${sans};
  color: ${(p) => (p.disabled ? "#aaa" : "#0b2a33")};
  white-space: nowrap;
`;

const Divider = styled.span`
  width: 1px;
  height: 26px;
  margin-left: 7px;
  background: #bbc4c4;
`;

const Film = () => (
  <svg width="14" height="14" viewBox="0 0 14 14">
    <path d="M0 0H14V14H0Z" fill="#5b5b5b" />
    <path d="M1.500 0V14M12.500 0V14" stroke="#ddd" strokeWidth="1" strokeDasharray="1 1.500" />
    <path d="M4 0H10V5H4Z" fill="#f9a63c" /><path d="M4 6H10V10H4Z" fill="#ecb66c" /><path d="M4 11H10V14H4Z" fill="#f8e858" />
  </svg>
);

const footerIcons = {
  create: (
    <svg width="17" height="17" viewBox="0 0 17 17">
      <path d="M13 2H16V13H13Z" fill="#f2c818" /><path d="M13 7H16V12H13Z" fill="#d42020" />
      <path d="M1.500 1.500H13.500V15.500H3Q1.500 15.500 1.500 14Z" fill="#86abdc" stroke="#466798" />
      <path d="M3 13H13V15H3Z" fill="#fff" /><path d="M2 2H7L2 8Z" fill="#f5f7d2" /><path d="M7 3H12V12H6Z" fill="#a9c7ec" />
    </svg>
  ),
  remove: (
    <svg width="17" height="17" viewBox="0 0 17 17">
      <path d="M1.500 2.500L3 1.500H14L15.500 2.500V5.500H1.500Z" fill="#ddd" stroke="#555" />
      <path d="M2.500 6H14.500L13.500 15.500H3.500Z" fill="#9cab3e" stroke="#737e26" />
      <path d="M8.500 7.500L10.500 10M11.500 11L10 13.500H8M6.500 13L5.500 11L7 9" fill="none" stroke="#e2eab0" strokeWidth="1.400" />
    </svg>
  ),
  open: (
    <svg width="17" height="17" viewBox="0 0 17 17">
      <path d="M1.500 15V1.500H9L11 4H13.500V8" fill="#d8d8d8" stroke="#777" />
      <path d="M4 4.500H12V9H4Z" fill="#fff" stroke="#999" /><path d="M4 8.500H16.500L14.500 15.500H1.500Z" fill="#7ca7dc" stroke="#345f9c" />
    </svg>
  ),
  save: (
    <svg width="17" height="17" viewBox="0 0 17 17">
      <path d="M1.500 3.500H16V15.500H1.500Z" fill="#fff" stroke="#777" /><path d="M2 10H16M3 13H11" stroke="#888" /><path d="M13 12V15" stroke="#000" strokeWidth="2" />
      <path d="M2 1.500H6Q10 1.500 10 6H13L8 11L4 6H7Q7 4 4 4Z" fill="#5f9cc8" stroke="#2c658e" />
    </svg>
  ),
};

const story = `   Labour market policies of countries
have responded in very different ways
to reduction in the activity level. Some
countries have reacted with measures
that squeeze the young and/or the
old out of the labour market, and this
has had a lasting effect, even after
the unemployment threat had passed.
If you look at France and Sweden as
compared to the US in the time
animation (play button), you will see
that while youth employment had
similar levels for the three countries in
the 1960's, in France the employment
rates for young people started
dropping significantly from the early
1970's. The same thing happened in
Sweden during the recession, starting
from 1989. In the United States youth
employment remained rather stable.
These differences in development
pattern have had a lasting influence
on the employment rates for these
age groups, even when times got`;

export default function App() {
  return (
    <Page>
      <Global />
      <Header>
        <OrgName>ORGANISATION<br />FOR ECONOMIC<br />CO-OPERATION<small>AND DEVELOPMENT</small></OrgName>
        <OecdLogo />
        <Brand>OECD Factbook eXplorer</Brand>
        <MenuBand>
          <Menu>
            {["Indicators", "Options", "View", "Help"].map((m) => <MenuItem key={m}>{m}</MenuItem>)}
          </Menu>
        </MenuBand>
        <Ncva>
          <svg width="70" height="24" viewBox="0 0 70 24" role="img" aria-label="NCVA">
            <path d="M0 23V0H6L12 13V0H17V23H12L5 9V23Z" fill="#fdbc10" />
            <text x="20" y="22" fontFamily="Liberation Sans" fontWeight="bold" fontStyle="italic" fontSize="22" fill="#56606e">CVA</text>
          </svg>
          <div>Linköping University</div>
        </Ncva>
        <GavBadge>Powered by<b><em>GAV</em> Flash</b></GavBadge>
      </Header>

      <Workspace>
        <MainArea>
          <TopRow>
            <MapPanel>
              <TitleBar><Title>Map (colour: GDP per capita, year: 2006)</Title><HelpButton /></TitleBar>
              <MapBody>
                <EuropeMap />
                <MapControls>
                  <NavRow>
                    <PanPad>
                      {["up", "left", "right", "down"].map((d) => (
                        <PanButton key={d} $size={18} $dir={d} aria-label={`Pan ${d}`}><Arrow dir={d} /></PanButton>
                      ))}
                    </PanPad>
                    <SmallButton $size={16} aria-label="Zoom out">-</SmallButton>
                    <ZoomSlider type="range" aria-label="Zoom" defaultValue={0} />
                    <SmallButton $size={16} aria-label="Zoom in">+</SmallButton>
                  </NavRow>
                  <LegendRow>
                    <ToolColumn>
                      {Object.entries(toolIcons).map(([name, icon]) => (
                        <SmallButton key={name} $size={22} aria-label={name} $faded={name.startsWith("Quant")}>{icon}</SmallButton>
                      ))}
                      <InfoSlot><InfoButton /></InfoSlot>
                      <VerticalDropDown label="Map indicator" width={22} height={162}>GDP per capita</VerticalDropDown>
                      <HelpButton />
                    </ToolColumn>
                    <Legend>
                      {bands.map(([color, value]) => (
                        <LegendBand key={value} $color={color}>
                          <LegendValue>{value}</LegendValue>
                          {value === "20000" && <LegendValue $last>10000</LegendValue>}
                        </LegendBand>
                      ))}
                    </Legend>
                  </LegendRow>
                </MapControls>
              </MapBody>
            </MapPanel>
            <Splitter><Grip /></Splitter>
            <MiddleColumn>
              <PlotPanel>
                <TitleBar $tabs>
                  <TabList><Tab $active $width={96}>Scatter Plot</Tab><Tab $width={81}>Data grid</Tab></TabList>
                  <HelpButton />
                </TitleBar>
                <PlotBody>
                  <PlotToolbar>
                    <span>Dot size:</span>
                    <HorizontalDropDown label="Dot size" width={236}>None</HorizontalDropDown>
                    <InfoButton />
                  </PlotToolbar>
                  <PlotRow>
                    <AxisColumn>
                      <InfoButton />
                      <VerticalDropDown label="Vertical axis" width={15} height={237}>Employment rates for age group 25-54</VerticalDropDown>
                    </AxisColumn>
                    <ScatterChart />
                    <SizeSlider type="range" aria-label="Dot scale" defaultValue={100} />
                  </PlotRow>
                  <PlotFooter>
                    <SmallButton $size={18} $tiny>1:1</SmallButton>
                    <SmallButton $size={18} $tiny>[ ]</SmallButton>
                    <AxisChoice>
                      <HorizontalDropDown label="Horizontal axis" width={237}>Employment rates for age group 15-24</HorizontalDropDown>
                      <InfoButton />
                    </AxisChoice>
                  </PlotFooter>
                </PlotBody>
              </PlotPanel>
              <TimePanel>
                <PlayButton aria-label="Play"><svg width="12" height="14" viewBox="0 0 12 14"><path d="M1 1L12 7L1 13Z" fill="#fff" /></svg></PlayButton>
                <SpeedScale width="4" height="34" viewBox="0 0 4 34"><path d="M0 .5H4M0 2.500H4M0 5.500H4M0 8.500H4M0 12.500H4M0 17.500H4M0 23.500H4M0 33.500H4" stroke="#888" /></SpeedScale>
                <SpeedSlider type="range" aria-label="Speed" defaultValue={100} />
                <TimeTrack>
                  <YearLabels><span>1960</span><span>1983</span><span>2006</span></YearLabels>
                  <Ticks>{Array.from({ length: 47 }, (_, i) => <i key={i} />)}</Ticks>
                  <TimeSlider type="range" aria-label="Year" min={1960} max={2006} defaultValue={2006} />
                </TimeTrack>
                <YearNow>2006</YearNow>
                <HelpButton />
              </TimePanel>
            </MiddleColumn>
          </TopRow>
          <Splitter $across><Grip $across /></Splitter>
          <BottomBar $tabs>
            <TabList><Tab $width={142}>Parallel Coordinates</Tab><Tab $active $width={92}>Time Graph</Tab></TabList>
            <HelpButton />
          </BottomBar>
        </MainArea>
        <CollapseSlot><CollapseButton aria-label="Collapse stories"><Arrow dir="right" /></CollapseButton></CollapseSlot>
        <StoriesPanel>
          <TitleBar><Title>Stories</Title><HelpButton /></TitleBar>
          <StoryRow $plain>Dashboard</StoryRow>
          <StoryRow><Film />Factbook eXplorer</StoryRow>
          <StoryRow><Film />Different labour market policy resp...</StoryRow>
          <StoryBody>
            <StoryTitle>Different labour market polic...</StoryTitle>
            <StoryScroll>
              <StoryText>{story}</StoryText>
              <Scrollbar>
                <ScrollButton aria-label="Scroll up"><Arrow dir="up" /></ScrollButton>
                <ScrollThumb><ThumbGrip /></ScrollThumb>
                <Track />
                <ScrollButton aria-label="Scroll down"><Arrow dir="down" /></ScrollButton>
              </Scrollbar>
            </StoryScroll>
          </StoryBody>
          <StoryRow><Film />Labour participation and fertility</StoryRow>
          <StoryFooter>
            <FooterButton $width={58}>{footerIcons.create}Create</FooterButton>
            <FooterButton $width={58} disabled>{footerIcons.remove}Remove</FooterButton>
            <Divider />
            <FooterButton $width={54}>{footerIcons.open}Open</FooterButton>
            <FooterButton $width={52} disabled>{footerIcons.save}Save as</FooterButton>
          </StoryFooter>
        </StoriesPanel>
      </Workspace>
    </Page>
  );
}
